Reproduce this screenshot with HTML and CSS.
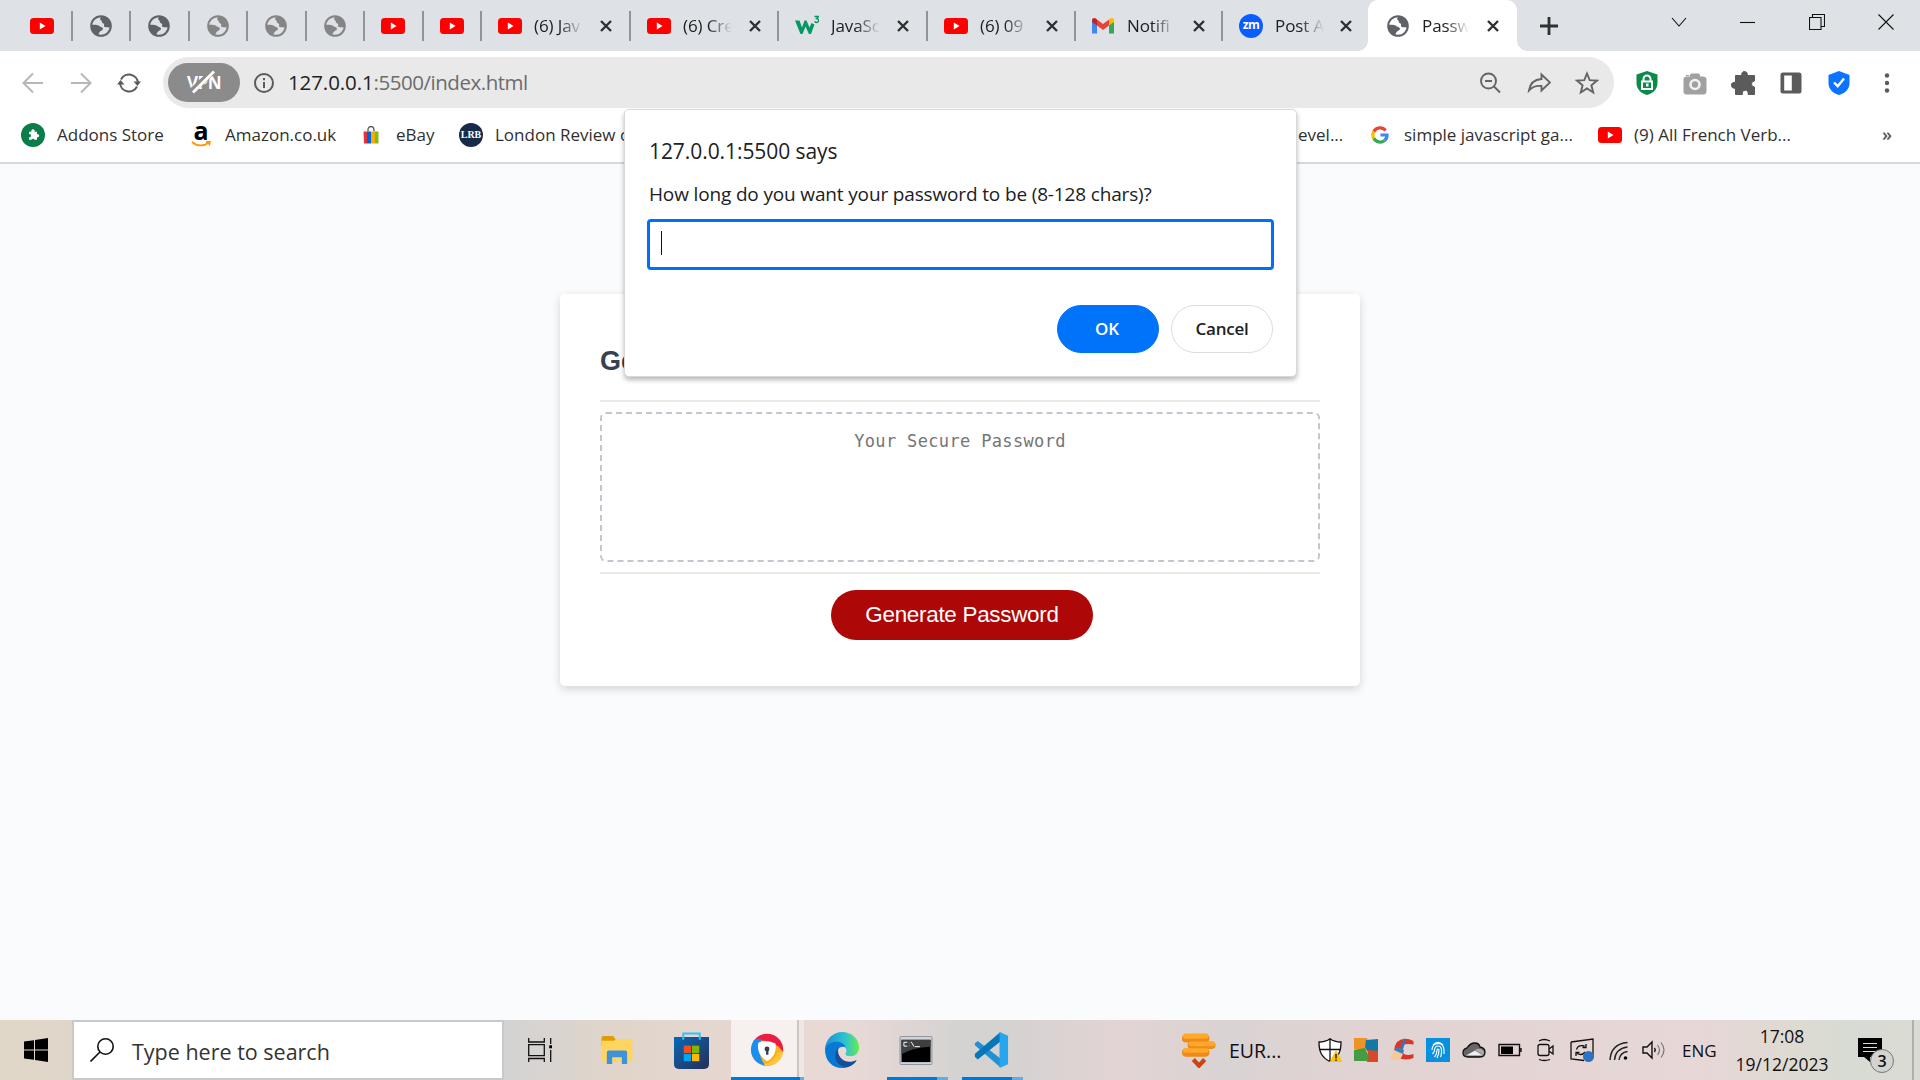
FILE: index.html
```
<!DOCTYPE html>
<html lang="en">
<head>
<meta charset="utf-8">
<title>Password Generator</title>
<link rel="stylesheet" href="styles.css">
</head>
<body>
<svg class="defs" aria-hidden="true">
  <symbol id="yt" viewBox="0 0 24 16"><rect width="24" height="16" rx="3.5" fill="#f00"/><path d="M9.800 4.400v7.200L15.500 8z" fill="#fff"/></symbol>
  <symbol id="globe" viewBox="0 0 22 22"><circle cx="11" cy="11" r="9.800" fill="none" stroke="currentColor" stroke-width="2"/><path fill="currentColor" d="M11.500 1.500C9.500 3 9.800 4.800 11.300 5.600C12.200 6.200 11.300 7.300 12.500 8C14 8.500 14.600 9.300 14 10.600C13.500 12 15 12.400 16.500 12.300C18.500 12.300 19.200 13 20.500 12C21.500 7 18 1.500 11.500 1.500zM1.500 10C4 9.600 7.500 10 8.600 10.600C10 11.800 10.800 12.200 12.200 12.400C13.600 13 13 15 11.600 15.600C9.600 16.300 9 17.800 8.200 20.200C4 18.600 1 15 1.500 10z"/></symbol>
  <symbol id="x" viewBox="0 0 12 12"><path d="M1 1l10 10M11 1L1 11" stroke="#2e3033" stroke-width="2.400"/></symbol>
</svg>

<header class="browser">
  <nav class="tabs">
    <div class="tab pin first"><svg class="yt"><use href="#yt"/></svg></div>
    <div class="tab pin"><svg class="globe"><use href="#globe"/></svg></div>
    <div class="tab pin wider"><svg class="globe"><use href="#globe"/></svg></div>
    <div class="tab pin"><svg class="globe faded"><use href="#globe"/></svg></div>
    <div class="tab pin wider"><svg class="globe faded"><use href="#globe"/></svg></div>
    <div class="tab pin"><svg class="globe faded"><use href="#globe"/></svg></div>
    <div class="tab pin wider"><svg class="yt"><use href="#yt"/></svg></div>
    <div class="tab pin"><svg class="yt"><use href="#yt"/></svg></div>
    <div class="tab wide wider"><svg class="yt"><use href="#yt"/></svg><span class="title">(6) Jav</span><svg class="close"><use href="#x"/></svg></div>
    <div class="tab wide"><svg class="yt"><use href="#yt"/></svg><span class="title">(6) Cre</span><svg class="close"><use href="#x"/></svg></div>
    <div class="tab wide wider"><svg class="fav" viewBox="0 0 24 24"><path d="M0 6.500h4.500l2.500 7 2.500-7h2l3 7 2-4.500 3 1.500L16 20h-2L10.500 12.500 7.500 20H5.500z" fill="#059862"/><path d="M19.500 2.500h4l-2 2.200c2.800 0 2.800 3.600 0 3.800-1 0-1.600-.4-1.900-1.200" fill="none" stroke="#059862" stroke-width="1.300"/></svg><span class="title">JavaSc</span><svg class="close"><use href="#x"/></svg></div>
    <div class="tab wide"><svg class="yt"><use href="#yt"/></svg><span class="title">(6) 09</span><svg class="close"><use href="#x"/></svg></div>
    <div class="tab wide gmail"><svg class="fav" viewBox="0 0 24 24"><path d="M1 7v12.500h5V11z" fill="#4285f4"/><path d="M18 11v8.500h5V7z" fill="#34a853"/><path d="M6 5.500v6l6 4.500 6-4.500v-6L12 10z" fill="#ea4335"/><path d="M1 6.500C1 4 3.500 3.500 5 4.600l1 .9v6L1 8z" fill="#c5221f"/><path d="M23 6.500C23 4 20.500 3.500 19 4.600l-1 .9v6L23 8z" fill="#fbbc04"/></svg><span class="title">Notifi</span><svg class="close"><use href="#x"/></svg></div>
    <div class="tab wide plain"><span class="zm">zm</span><span class="title">Post A</span><svg class="close"><use href="#x"/></svg></div>
    <div class="tab wide active"><svg class="globe"><use href="#globe"/></svg><span class="title">Passw</span><svg class="close"><use href="#x"/></svg></div>
    <svg class="newtab" viewBox="0 0 18 18"><path d="M9 0v18M0 9h18" stroke="#2e3033" stroke-width="2.800"/></svg>
    <div class="winctl">
      <svg viewBox="0 0 16 16"><path d="M1 4l7 8 7-8" /></svg>
      <svg viewBox="0 0 16 16"><path d="M0 8.500h15" /></svg>
      <svg viewBox="0 0 16 16"><path d="M.5 3.500h11.500v12H.5zM3.500 3.500V.5h12v12H12" /></svg>
      <svg viewBox="0 0 16 16"><path d="M.5.5l15 15M15.500.5l-15 15" /></svg>
    </div>
  </nav>

  <div class="toolbar">
    <div class="navs">
      <svg class="dim" viewBox="0 0 24 24"><path d="M22 12H3M12 2.500L2.500 12l9.500 9.500"/></svg>
      <svg class="dim" viewBox="0 0 24 24"><path d="M2 12h19M12 2.500l9.500 9.500-9.500 9.500"/></svg>
      <svg viewBox="0 0 24 24"><path d="M4 8.500A9 9 0 0 1 21 12M20 15.500A9 9 0 0 1 3 12"/><path class="solid" d="M16.500 10.500h7.500L20.500 15zM0 13.500h7.500L3.500 9z"/></svg>
    </div>
    <div class="omnibox">
      <span class="vpn">VPN<svg viewBox="0 0 26 26"><path d="M2 22L22 3" stroke="#8b8b8b" stroke-width="6"/><path d="M3 23.500L24 2.500" stroke="#fff" stroke-width="2.800"/></svg></span>
      <svg class="info" viewBox="0 0 22 22"><circle cx="11" cy="11" r="9" /><path d="M11 10v6M11 6v2.200"/></svg>
      <span class="url"><b>127.0.0.1</b>:5500/index.html</span>
      <div class="acts">
        <svg viewBox="0 0 24 24"><circle cx="10.500" cy="10" r="7.500"/><path d="M16 15.500l6 6M7 10h7"/></svg>
        <svg viewBox="0 0 24 24"><path d="M2 19.500C3 12.500 8 8.500 14.500 8V3.500L23 11.500l-8.500 8V15C9 14.500 5 16 2 19.500z"/></svg>
        <svg viewBox="0 0 24 24"><path d="M12 2.500l2.700 6.600 7.300.5-5.600 4.700 1.800 7.200L12 17.500l-6.200 4 1.800-7.200L2 9.600l7.300-.5z"/></svg>
      </div>
    </div>
    <div class="exts">
      <svg viewBox="0 0 24 24"><path d="M12 0l10.500 3.500V12c0 6-4.500 10.500-10.500 12C6 22.500 1.500 18 1.500 12V3.500z" fill="#0b8a4a"/><path d="M8.500 10.500V8a3.500 3.500 0 0 1 7 0v2.500M7 10.500h10v7.500H7z" fill="none" stroke="#fff" stroke-width="2"/><path d="M11 12.500h2.500v3H11z" fill="#fff"/></svg>
      <svg viewBox="0 0 24 24"><path d="M1 8q0-2 2-2h4l1-3h8l1 3h3q3 0 3 2v13q0 2-2 2H3q-2 0-2-2zM3 4.500h3" fill="#a1a1a1" stroke="#a1a1a1"/><circle cx="12" cy="13.500" r="4.500" fill="none" stroke="#f2f2f2" stroke-width="2.600"/></svg>
      <svg viewBox="0 0 24 24"><path d="M4.500 4.500H11a2.800 2.800 0 1 1 5 0h7.500V10a3 3 0 1 0 0 6v7.500H17a3 3 0 1 0-5.500 0H4.500V17a3 3 0 1 1 0-5.500z" fill="#5b5b5b" stroke="#5b5b5b"/></svg>
      <svg viewBox="0 0 24 24"><path fill-rule="evenodd" d="M4 1.500h16q2.500 0 2.500 2.500v16q0 2.500-2.500 2.500H4q-2.500 0-2.500-2.500V4Q1.500 1.500 4 1.500zM5.200 4.500v15h7.600v-15z" fill="#5b5b5b"/></svg>
      <svg viewBox="0 0 24 24"><path d="M12 0l10.500 4v8c0 6-4.500 10.500-10.500 12C6 22.500 1.500 18 1.500 12V4z" fill="#0a73ff"/><path d="M7 11.500l3.700 3.700L17 7.500" fill="none" stroke="#fff" stroke-width="2.400"/></svg>
      <svg viewBox="0 0 24 24"><g fill="#5b5b5b"><circle cx="12" cy="4.500" r="2.200"/><circle cx="12" cy="12" r="2.200"/><circle cx="12" cy="19.500" r="2.200"/></g></svg>
    </div>
  </div>

  <div class="bookmarks">
    <svg class="bi" viewBox="0 0 24 24"><circle cx="12" cy="12" r="12" fill="#0b7d4b"/><path d="M8 9.500h2.500a1.700 1.700 0 1 1 3 0H16V12a1.600 1.600 0 1 1 0 3v2.500h-2.500a1.700 1.700 0 0 0-3 0H8V15a1.600 1.600 0 1 0 0-3z" fill="#fff" transform="translate(0 -.8)"/></svg>
    <span class="b1">Addons Store</span>
    <span class="amz">a<svg viewBox="0 0 20 6"><path d="M1 1c5 4.500 12 4.500 17 .5M15 .8l4-.3-.8 4" fill="none" stroke="#f90" stroke-width="1.700"/></svg></span>
    <span class="b2">Amazon.co.uk</span>
    <svg class="bag" viewBox="0 0 16 18"><path d="M5 5V3a3 3 0 0 1 6 0v2" fill="none" stroke="#555" stroke-width="1.300"/><path d="M.5 5H4v12H1z" fill="#e53238"/><path d="M4 5h4v12H4z" fill="#0064d2"/><path d="M8 5h4v12H8z" fill="#f5af02"/><path d="M12 5h3.500v12H12z" fill="#86b817"/></svg>
    <span class="b3">eBay</span>
    <span class="lrb">LRB</span>
    <span class="b4">London Review of</span>
    <span class="b5">evel...</span>
    <svg class="goog" viewBox="0 0 20 20"><g fill="none" stroke-width="3.600"><path d="M16.200 5A8 8 0 0 0 3.100 6.200" stroke="#ea4335"/><path d="M3.100 6.200a8 8 0 0 0 0 7.600" stroke="#fbbc05"/><path d="M3.100 13.800a8 8 0 0 0 12 2.200" stroke="#34a853"/><path d="M15.100 16A7.500 7.500 0 0 0 17.800 10H10.500" stroke="#4285f4"/></g></svg>
    <span class="b6">simple javascript ga...</span>
    <svg class="yt"><use href="#yt"/></svg>
    <span class="b7">(9) All French Verb...</span>
    <span class="more">»</span>
  </div>
</header>

<main class="page">
  <section class="card">
    <h2>Generate a Password</h2>
    <div class="body"><div class="secret">Your Secure Password</div></div>
    <button class="generate">Generate Password</button>
  </section>
</main>

<div class="dialog">
  <h1>127.0.0.1:5500 says</h1>
  <p>How long do you want your password to be (8-128 chars)?</p>
  <div class="field"><i></i></div>
  <div class="btns"><span class="ok">OK</span><span class="cancel">Cancel</span></div>
</div>

<footer class="taskbar">
  <div class="start"><svg viewBox="0 0 24 24"><path d="M0 3.500l10-1.300v9.300H0zM11 2l13-2v11.500H11zM0 12.500h10v9.300L0 20.500zM11 12.500h13V24l-13-2z"/></svg></div>
  <div class="search"><svg viewBox="0 0 24 24"><circle cx="15.500" cy="8.500" r="7.700"/><path d="M10 14L.5 23.500"/></svg><span>Type here to search</span></div>
  <div class="cell tv"><svg viewBox="0 0 24 24"><path d="M.7 0v4h15.600V0M.7 6.700h15.600v11H.7zM.7 24v-3.500h15.600V24M22.700 0v6M22.700 12v12" fill="none" stroke="#111" stroke-width="1.300"/><path d="M21.200 7.300h3v3h-3z"/></svg></div>
  <div class="cell folder"><svg viewBox="0 0 32 30"><path d="M0 2q0-2 2-2h10l3 4v6H0z" fill="#e19c05"/><path d="M0 5h13l2-2h15q2 0 2 2v20q0 2-2 2H2q-2 0-2-2z" fill="#ffd561"/><path d="M5.500 29V17q0-2 2-2h17q2 0 2 2v12H21v-7H11v7z" fill="#3e92dc"/></svg></div>
  <div class="cell store"><svg viewBox="0 0 36 38"><defs><linearGradient id="sg" x2="1" y2="1"><stop stop-color="#0968b5"/><stop offset="1" stop-color="#262f58"/></linearGradient></defs><path d="M0 5h36v28q0 5-5 5H5q-5 0-5-5z" fill="url(#sg)"/><path d="M9.500 8V1.500h17V8" fill="none" stroke="#31c3f5" stroke-width="2"/><path d="M10 14h7.500v7.500H10z" fill="#f25022"/><path d="M18.500 14H26v7.500h-7.500z" fill="#7fba00"/><path d="M10 22.500h7.500V30H10z" fill="#00a4ef"/><path d="M18.500 22.500H26V30h-7.500z" fill="#ffb900"/></svg></div>
  <div class="cell app"><svg viewBox="0 0 36 36"><circle cx="18" cy="18" r="17" fill="#f7b21c"/><path d="M3 10A17 17 0 0 1 35 20Q27 8 12 8z" fill="#ed1c45"/><path d="M4 8Q7 5 12 7 6 20 16 34.500A17 17 0 0 1 4 8z" fill="#1b8ff0"/><path d="M14 34Q26 31 29 21l6-1A17 17 0 0 1 14 34z" fill="#fcc83a"/><path d="M9 10q9-3 18 1 2 13-9 19Q6 22 9 10z" fill="#fff"/><circle cx="18" cy="17" r="2.600" fill="#333d4d"/><path d="M17 17h2.500v6H17z" fill="#333d4d"/></svg></div>
  <div class="cell edge"><svg viewBox="0 0 36 38"><defs><linearGradient id="eg"><stop stop-color="#1a8ed6"/><stop offset=".6" stop-color="#2dc3d0"/><stop offset="1" stop-color="#6bea50"/></linearGradient></defs><path d="M0 18C1 7 9 0 18 0c10 0 18 7 18 16 0 6-4 9.500-9 9.500-4 0-6-1-5-3 2-3 0-8-5-8C9 14 3 16 0 18z" fill="url(#eg)"/><path d="M0 18C4 8 19 8 22 16c-6-2-10 2-9 8 1 7 8 11 20 6-4 6-10 8-15 8C8 38 0 31 0 18z" fill="#0878d2"/><path d="M14 17c-7 8-2 20 9 20 5-1 9-4 10.500-7.500C23 35 12 28 14 17z" fill="#14509a"/></svg></div>
  <div class="cell term run"><svg viewBox="0 0 34 30"><rect x=".5" y=".5" width="33" height="29" rx="1" fill="#d0d3d7" stroke="#8b9198"/><path d="M2 4h30v23H2z"/><path d="M2 4h30v7Q12 12 2 19z" fill="#3d3f41"/><path d="M8 6.500H4.500v4H8M10 7v.5M10 10v.5M12 6l3 5M16 11h5" fill="none" stroke="#fff"/></svg></div>
  <div class="cell code run"><svg viewBox="0 0 36 38"><path d="M1 12l3-2.500L28 28v9.500L1 14z" fill="#2490d4"/><path d="M1 26l3 3L28 10V0L1 23z" fill="#0877b9"/><path d="M27 0l9 4v30l-9 4z" fill="#27a5ee"/></svg></div>
  <div class="news"><svg viewBox="0 0 36 36"><path d="M12 27.500l6 6.500 6-6.500" fill="none" stroke="#cb4514" stroke-width="4.500"/><g fill="#ee8a17"><rect x="0" y="16" width="29" height="8.500" rx="4"/><rect x="6" y="8.500" width="29.500" height="8" rx="4"/><rect x="0" y="1" width="29" height="8.500" rx="4"/></g><g fill="#ffa82b"><rect x="1" y="15.500" width="27" height="5" rx="2.500"/><rect x="7" y="8.500" width="28" height="5" rx="2.500"/><rect x="1" y="0" width="27" height="5.500" rx="2.700"/></g></svg><span>EUR...</span></div>
  <div class="tray">
    <svg viewBox="0 0 24 24"><path d="M12 .7C9 3 5 4 1 4c0 9 2 15 11 19.500C21 19 23 13 23 4c-4 0-8-1-11-3.300zM12 1v22M1 11.500h22" fill="#fff" stroke="#111" stroke-width="1.300"/><path d="M18 12l6.500 12h-13z" fill="#fdc116"/><path d="M18 16v4.500M18 21.500V23" stroke="#111" stroke-width="1.300"/></svg>
    <svg viewBox="0 0 24 24"><path d="M0 0h13l2 12-7 1-8-2z" fill="#ee9426"/><path d="M12 2l12-1v12l-10 1-3-5z" fill="#1478a7"/><path d="M14 12l10 1v11H13z" fill="#d9482a"/><path d="M0 12l11-2 4 9-2 4H0z" fill="#459c45"/></svg>
    <svg viewBox="0 0 24 24"><path d="M23.500 6.500V3Q14-2 7 4 2 11 6 18q7 6 17.500 2v-4q-9 3-12-3-1-9 12-6.500z" fill="#d6382a"/><path d="M15 1l-4 12" stroke="#3077bd" stroke-width="2.500"/><path d="M7 9l7 3-1 4-9-4z" fill="#347fc0"/><path d="M4 12l9 4-3 6q-6 1-10-3z" fill="#efcb9e"/></svg>
    <svg viewBox="0 0 24 24"><rect width="24" height="24" fill="#0690de"/><g fill="none" stroke="#fff" stroke-width="1.200"><path d="M7 7q5-5 10 0M6 12q0-6 6-6.500 6 .5 6 6.500v4M6.500 16q2-2 2-4 .5-4 3.500-4 4 0 3.500 6 0 3-1 5M8.500 19q2.500-3 2.500-7 1-2 2 0 0 4-2 8"/></g></svg>
    <svg viewBox="0 0 24 24"><path d="M6 19q-5 0-5-4 0-4 4-5 3-5 8-5 4 0 5 4 5 1 5 5 0 5-5 5z" fill="#666" stroke="#111" stroke-width="1.300"/><path d="M4 17.500l9-5 8 5z" fill="#eee"/><path d="M13 12q3-2 6-1 3 1 3 4l-1 2z" fill="#aaa"/></svg>
    <svg viewBox="0 0 24 24"><path d="M1 6.500h20.500v11H1zM23 10v4" fill="none" stroke="#111" stroke-width="1.400"/><path d="M3 8.500h12v7.500H3z"/></svg>
    <svg viewBox="0 0 24 24"><g fill="none" stroke="#111" stroke-width="1.300"><rect x="4" y="6.500" width="11" height="11" rx="2"/><path d="M15 11l4-3v8l-4-3M5 3q5-3 11 0M5 21.500q5 2 11 0"/></g></svg>
    <svg viewBox="0 0 24 24"><path d="M1 4l22-3v19M1 4v17l13 1.500M6.500 11.500q1.500-5 8-3.500m1.500-2v3.500h-3.500M15 14q-3 4-8 1.500M6 18v-3.500h3.500" fill="none" stroke="#111" stroke-width="1.300"/><circle cx="18.500" cy="18.500" r="5.500" fill="#2d73bf"/></svg>
    <svg viewBox="0 0 24 24"><path d="M4 22Q5 6 21.500 4.500M8.500 22Q9.500 10.500 21.500 9M13 22q1-7.500 8.500-8.500" fill="none" stroke="#222" stroke-width="1.400"/><circle cx="19.500" cy="20" r="1.800"/></svg>
    <svg viewBox="0 0 24 24"><path d="M1 9h4l5-5v16l-5-5H1zM12.500 10q1.500 2 0 4" fill="none" stroke="#111" stroke-width="1.400"/><path d="M15.500 7q4 5 0 10M19 4.500q6 7.500 0 15" fill="none" stroke="#777" stroke-width="1.200"/></svg>
  </div>
  <span class="lang">ENG</span>
  <div class="clock"><span>17:08</span><span>19/12/2023</span></div>
  <div class="notif"><svg viewBox="0 0 24 24"><path d="M0 0h24v19H12v5l-6-5H0z"/><path d="M5 5.500h14M5 9.500h14M5 13.500h14" stroke="#ddd" stroke-width="1.200"/></svg><span>3</span></div>
  <div class="peek"></div>
</footer>
</body>
</html>
```
FILE: styles.css
```
*{box-sizing:border-box}
body{margin:0;width:1920px;height:1080px;overflow:hidden;display:flex;flex-direction:column;background:#f9fbfd;font-family:"Open Sans","Noto Sans",sans-serif;position:relative;color:#202124}
svg{flex:none;display:block}
.defs{position:absolute;width:0;height:0}
.yt{width:24px;height:16px}
.globe{width:22px;height:22px;color:#5f6368}
.faded{color:#858585}
.fav{width:24px;height:24px}

.browser{height:164px;flex:none;background:#fff;border-bottom:2px solid #d8d8d8}
.tabs{display:flex;height:51px;background:#dee1e6;padding-left:12px}
.tab{display:flex;align-items:center;height:51px;position:relative;flex:none}
.tab::after{content:"";position:absolute;right:0;top:11px;width:2px;height:30px;background:#929497}
.pin{width:58px;justify-content:center;padding-right:2px}
.pin.wider{width:59px;padding-right:3px}
.pin.first{width:61px;padding-right:1px}
.wide{width:148px;padding-left:16px}
.wide.wider{width:149px}
.wide.gmail{width:147px;padding-left:15px}
.wide.plain{width:145px}
.plain::after,.active::after{display:none}
.title{width:50px;margin-left:12px;font-size:17px;line-height:26px;letter-spacing:-.1px;white-space:nowrap;overflow:hidden;-webkit-mask-image:linear-gradient(90deg,#000 50%,transparent 98%);mask-image:linear-gradient(90deg,#000 50%,transparent 98%)}
.close{width:12px;height:12px;margin-left:16px}
.plain .close{margin-left:15px}
.wide.active{width:149px;padding-left:19px;background:#fff;border-radius:10px 10px 0 0}
.active::before{content:"";position:absolute;left:-10px;right:-10px;bottom:0;height:10px;background:radial-gradient(circle at 0 0,transparent 9.5px,#fff 10px) left/10px 10px no-repeat,radial-gradient(circle at 100% 0,transparent 9.5px,#fff 10px) right/10px 10px no-repeat}
.active .title{margin-left:13px;width:48px}
.active .close{margin-left:17px}
.zm{width:24px;height:24px;border-radius:50%;background:#0b5cff;color:#fff;font-weight:700;font-size:12px;line-height:22px;text-align:center;letter-spacing:-.5px}
.newtab{width:18px;height:18px;margin:17px 0 0 23px}
.winctl{display:flex;gap:53px;margin:14px 0 0 113px}
.winctl svg{width:16px;height:16px;fill:none;stroke:#111;stroke-width:1.1}

.toolbar{display:flex;align-items:center;height:63px}
.navs{display:flex;width:163px;padding-left:21px;gap:24px}
.navs svg{width:24px;height:24px;fill:none;stroke:#5b5b5b;stroke-width:2}
.navs .dim{stroke:#b7b7b7}
.navs .solid{fill:#5b5b5b;stroke:none}
.omnibox{width:1451px;height:51px;border-radius:26px;background:#e9e9e9;display:flex;align-items:center;padding-left:5px}
.vpn{width:72px;height:39px;border-radius:20px;background:#8b8b8b;color:#fff;font-weight:700;font-size:17px;display:flex;align-items:center;justify-content:center;position:relative;letter-spacing:-.5px}
.vpn svg{position:absolute;width:26px;height:26px;left:22px;top:6px;fill:none}
.info{width:22px;height:22px;margin-left:13px;fill:none;stroke:#5b5b5b;stroke-width:2}
.url{margin-left:13px;font-size:20.5px;color:#6c6c6c;letter-spacing:-.47px;padding-bottom:2px}
.url b{font-weight:400;color:#222;letter-spacing:-.1px}
.acts{display:flex;gap:24.5px;margin-left:auto;margin-right:15px}
.acts svg{width:24px;height:24px;fill:none;stroke:#646464;stroke-width:1.9}
.exts{display:flex;gap:24px;margin-left:21px}
.exts svg{width:24px;height:24px}

.bookmarks{display:flex;align-items:center;height:42px;padding-left:21px;font-size:17px;line-height:23px;white-space:nowrap;color:#303030}
.bookmarks>span[class^=b]{padding-bottom:2px}
.bi{width:24px;height:24px}
.b1{margin-left:12px;width:134px}
.amz{width:20px;height:26px;display:flex;flex-direction:column;align-items:center;font-weight:700;font-size:25px;line-height:16px;color:#000}
.amz svg{width:20px;height:6px;margin-top:3px}
.b2{margin-left:14px;width:138px}
.bag{width:16px;height:19px}
.b3{margin-left:17px;width:63px}
.lrb{width:24px;height:24px;border-radius:50%;background:#182a49;color:#fff;font:bold 10px/24px "Liberation Serif",serif;text-align:center}
.b4{margin-left:12px;width:803px}
.b5{width:73px}
.goog{width:18px;height:18px}
.b6{margin-left:15px;width:194px}
.b7{margin-left:12px}
.more{margin-left:auto;margin-right:28px;font-weight:600;font-size:18px;color:#555;padding-bottom:2px}

.page{flex:1;padding-top:130px}
.card{width:800px;height:392px;margin:0 auto;background:#fff;border-radius:5px;box-shadow:0 3px 8px rgba(0,0,0,.16);padding:0 40px;display:flex;flex-direction:column;font-family:"Liberation Sans",sans-serif}
.card h2{margin:0;height:106px;padding-top:50px;font-size:27px;line-height:34px;color:#374250}
.body{border:solid #e9e9e9;border-width:2px 0;height:174px;padding:10px 0}
.secret{height:150px;border:2px dashed #c1c7d0;border-radius:6px;padding-top:16px;text-align:center;font:17px/22px "DejaVu Sans Mono",monospace;letter-spacing:.35px;color:#757575}
.generate{align-self:center;margin:16px 0 0 4px;width:262px;height:50px;border:0;border-radius:25px;background:#ae0707;color:#fff;font:22.4px "Liberation Sans",sans-serif;letter-spacing:-.27px;padding:0;white-space:nowrap}

.dialog{position:absolute;left:624px;top:109px;width:673px;height:268px;background:#fff;border:1px solid #d9d9d9;border-radius:5px;box-shadow:0 3px 5px rgba(0,0,0,.28);padding:0 22px 0 22px;display:flex;flex-direction:column}
.dialog h1{margin:25px 0 0 2px;font-size:21px;line-height:32px;font-weight:400;letter-spacing:-.07px}
.dialog p{margin:13px 0 0 2px;font-size:19px;line-height:28px;letter-spacing:-.15px;white-space:nowrap}
.field{margin-top:11px;height:51px;border:3px solid #0070f8;border-radius:4px;width:627px;padding:9px 0 0 11px}
.field i{display:block;width:1px;height:24px;background:#111}
.btns{display:flex;justify-content:flex-end;gap:12px;margin:35px 1px 0 0;font-size:17px;letter-spacing:-.2px;font-weight:600}
.btns span{width:102px;height:48px;border-radius:24px;line-height:46px;text-align:center;border:1px solid #dcdcdc}
.btns .ok{background:#0073fb;border-color:#0073fb;color:#fff;padding-right:2px}

.taskbar{height:60px;flex:none;display:flex;background:linear-gradient(90deg,#e1d7c8 0,#dfd6ca 80px,#d4d3d3 510px,#e1d5ca 620px,#e8d9d4 790px,#e8d9d6 850px,#d4d3d2 960px,#d5d2d1 1010px,#e2d4d4 1120px,#dad3d3 1230px,#e2d3d3 1370px,#e7d7d7 1700px,#dedad2 1790px,#d8dbd3 1850px,#dadbd4);color:#111}
.start{width:72px;padding:18px 0 0 24px}
.start svg{width:24px;height:24px}
.search{width:432px;border:2px solid #c9c9c9;background:#fff;display:flex;align-items:center;padding-left:16px;font-size:21.5px;white-space:nowrap;color:#333}
.search svg{width:24px;height:24px;fill:none;stroke:#111;stroke-width:1.6;margin-right:18px}
.search span{padding-top:2px}
.cell{display:flex;justify-content:center;align-items:center}
.tv{width:72px}.tv svg{width:24px;height:24px}
.folder{width:82px}.folder svg{width:32px;height:29px}
.store{width:67px}.store svg{width:35px;height:37px}
.app{width:73px;margin-left:6px;padding-right:1px;background:linear-gradient(90deg,#f6f1ee 66px,#cfc4be 66px,#cfc4be 68px,#efe7e4 68px);border-bottom:3px solid;border-image:linear-gradient(90deg,#0078d7 68px,#64abe4 68px) 1}
.app svg{width:34px;height:36px;margin-top:2px}
.edge{width:76px}.edge svg{width:36px;height:36px}
.term{width:61px;margin-left:7px}.term svg{width:34px;height:29px}
.code{width:61px;margin-left:14px}.code svg{width:36px;height:36px}
.run{border-bottom:3px solid;border-image:linear-gradient(90deg,#0078d7 49px,#64abe4 49px) 1;padding:3px 3px 0 0}
.news{display:flex;align-items:center;margin-left:159px;width:130px;font-size:19.5px}
.news svg{width:34px;height:35px;margin-right:13px}
.tray{display:flex;align-items:center;gap:12px;width:365px;padding-left:6px}
.tray svg{width:24px;height:24px}
.lang{width:40px;margin-left:5px;font-size:17px;line-height:61px}
.clock{width:120px;display:flex;flex-direction:column;text-align:center;font-size:17.5px;line-height:28px;padding-top:2px}
.notif{width:36px;margin-left:16px;padding-top:18px;position:relative}
.notif svg{width:24px;height:24px}
.notif span{position:absolute;left:12px;top:29px;width:24px;height:24px;border-radius:50%;background:#d3d3d1;border:1px solid #777;font-size:16px;font-weight:600;line-height:22px;text-align:center}
.peek{width:2px;background:#aeb0ac;margin-left:auto;margin-right:6px}
```
